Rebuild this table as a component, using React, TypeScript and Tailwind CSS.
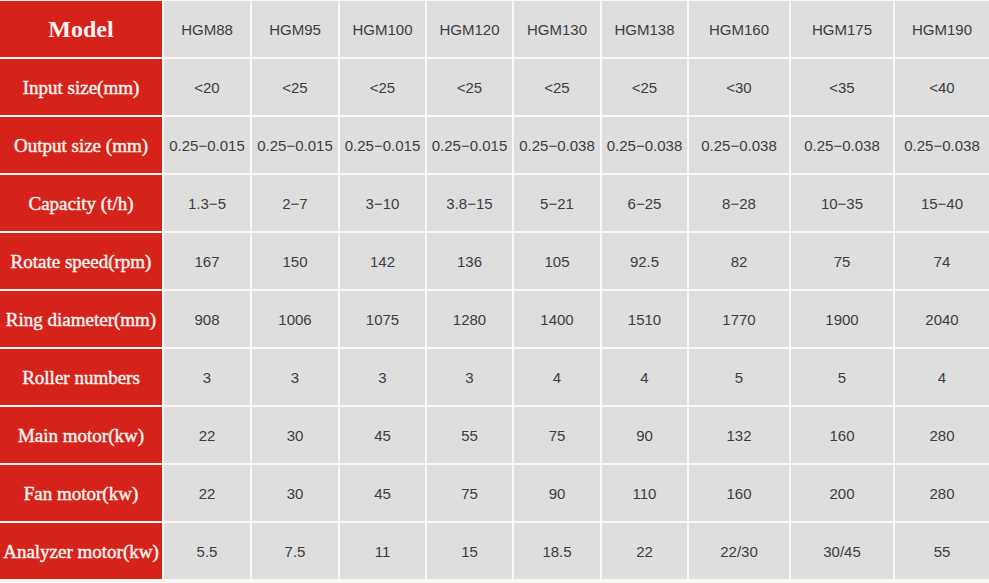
/**
 * HGM mill spec table
 */

import React from 'react';

const models = ['HGM88', 'HGM95', 'HGM100', 'HGM120', 'HGM130', 'HGM138', 'HGM160', 'HGM175', 'HGM190'];

const rows: { label: string; values: string[] }[] = [
  { label: 'Input size(mm)', values: ['<20', '<25', '<25', '<25', '<25', '<25', '<30', '<35', '<40'] },
  {
    label: 'Output size (mm)',
    values: [
      '0.25−0.015',
      '0.25−0.015',
      '0.25−0.015',
      '0.25−0.015',
      '0.25−0.038',
      '0.25−0.038',
      '0.25−0.038',
      '0.25−0.038',
      '0.25−0.038',
    ],
  },
  { label: 'Capacity (t/h)', values: ['1.3−5', '2−7', '3−10', '3.8−15', '5−21', '6−25', '8−28', '10−35', '15−40'] },
  { label: 'Rotate speed(rpm)', values: ['167', '150', '142', '136', '105', '92.5', '82', '75', '74'] },
  { label: 'Ring diameter(mm)', values: ['908', '1006', '1075', '1280', '1400', '1510', '1770', '1900', '2040'] },
  { label: 'Roller numbers', values: ['3', '3', '3', '3', '4', '4', '5', '5', '4'] },
  { label: 'Main motor(kw)', values: ['22', '30', '45', '55', '75', '90', '132', '160', '280'] },
  { label: 'Fan motor(kw)', values: ['22', '30', '45', '75', '90', '110', '160', '200', '280'] },
  { label: 'Analyzer motor(kw)', values: ['5.5', '7.5', '11', '15', '18.5', '22', '22/30', '30/45', '55'] },
];

function LabelCell({ children, big }: { children: React.ReactNode; big?: boolean }) {
  return (
    <div
      className={`h-[56px] flex items-center justify-center bg-[#d5221a] text-[#fbf3ef] whitespace-nowrap font-['Liberation_Serif',serif] ${
        big ? 'text-[24px] font-bold' : 'text-[19px] pt-[3px] [-webkit-text-stroke:0.45px_#fbf3ef]'
      }`}
    >
      {children}
    </div>
  );
}

function ValueCell({ children }: { children: React.ReactNode }) {
  return (
    <div className="h-[56px] flex items-center justify-center pt-[2px] bg-[#dedede] text-[#3d3d3d] text-[15px] whitespace-nowrap font-['Liberation_Sans',Arial,sans-serif]">
      {children}
    </div>
  );
}

export default function App() {
  return (
    <div className="w-[989px] h-[583px] bg-[#f8f8f4] pt-[1px] overflow-hidden">
      <div className="grid grid-cols-[162px_86px_86px_85px_85px_86px_85px_100px_102px_94px] gap-[2px]">
        {/* Header row */}
        <LabelCell big>Model</LabelCell>
        {models.map((m) => (
          <ValueCell key={m}>{m}</ValueCell>
        ))}

        {/* Spec rows */}
        {rows.map((row) => (
          <React.Fragment key={row.label}>
            <LabelCell>{row.label}</LabelCell>
            {row.values.map((v, i) => (
              <ValueCell key={i}>{v}</ValueCell>
            ))}
          </React.Fragment>
        ))}
      </div>
    </div>
  );
}
